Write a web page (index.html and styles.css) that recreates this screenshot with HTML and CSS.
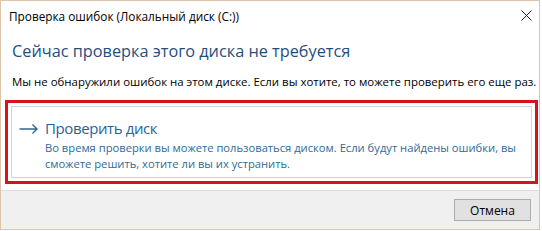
FILE: index.html
```html
<!DOCTYPE html>
<html lang="ru">
<head>
<meta charset="utf-8">
<title>Проверка ошибок</title>
<link rel="stylesheet" href="styles.css">
</head>
<body>
<div class="window">
  <div class="titlebar">
    <span class="title">Проверка ошибок (Локальный диск (C:))</span>
    <span class="close">
      <svg width="11" height="11" viewBox="0 0 11 11"><path d="M0.5 0.5 L10.5 10.5 M10.5 0.5 L0.5 10.5" stroke="#222" stroke-width="1" fill="none"/></svg>
    </span>
  </div>
  <div class="content">
    <div class="heading">Сейчас проверка этого диска не требуется</div>
    <div class="text">Мы не обнаружили ошибок на этом диске. Если вы хотите, то можете проверить его еще раз.</div>
  </div>
  <div class="highlight">
    <div class="cmdlink">
      <svg class="arrow" width="20" height="12" viewBox="0 0 20 12"><path d="M0.5 6 H18 M13.5 1.5 L18 6 L13.5 10.5" stroke="#2f6693" stroke-width="1.4" fill="none"/></svg>
      <div class="cmd-body">
        <div class="cmd-title">Проверить диск</div>
        <div class="cmd-desc">Во время проверки вы можете пользоваться диском. Если будут найдены ошибки, вы<br>сможете решить, хотите ли вы их устранить.</div>
      </div>
    </div>
  </div>
  <div class="footer">
    <button class="btn">Отмена</button>
  </div>
</div>
</body>
</html>
```
FILE: styles.css
```css
html, body {
  margin: 0;
  padding: 0;
  background: #ffffff;
}
.window {
  width: 538px;
  height: 228px;
  border: 1px solid #dcc5aa;
  background: #ffffff;
  display: flex;
  flex-direction: column;
  font-family: "Open Sans", "Noto Sans", sans-serif;
  font-size: 11.3px;
  color: #000;
}
.titlebar {
  height: 31px;
  box-sizing: border-box;
  display: flex;
  align-items: flex-start;
  justify-content: space-between;
  padding: 7px 7px 0 8px;
}
.title {
  font-size: 11.8px;
  line-height: 16px;
  color: #000;
}
.close {
  display: flex;
  margin-top: 2px;
}
.content {
  padding: 9px 11px 0 11px;
}
.heading {
  font-size: 16.3px;
  color: #1f4e7f;
  line-height: 20px;
  white-space: nowrap;
}
.text {
  margin-top: 13px;
  font-size: 11.45px;
  line-height: 16px;
  white-space: nowrap;
}
.highlight {
  margin: 10px 1px 0 4px;
  border: 3px solid #d8121b;
  padding: 3px;
}
.cmdlink {
  border: 1px solid #c9d7e3;
  display: flex;
  align-items: flex-start;
  padding: 11px 10px 5px 7px;
}
.arrow {
  margin-top: 5px;
  margin-right: 6px;
  flex: none;
}
.cmd-title {
  font-size: 15px;
  letter-spacing: -0.4px;
  line-height: 20px;
  color: #28639a;
}
.cmd-desc {
  margin-top: 2px;
  font-size: 11.2px;
  line-height: 16px;
  color: #2e6b98;
  white-space: nowrap;
}
.footer {
  margin-top: auto;
  height: 38px;
  border-top: 1px solid #dedede;
  background: #f0f0f0;
  display: flex;
  align-items: center;
  justify-content: flex-end;
  padding-right: 8px;
}
.btn {
  width: 77px;
  height: 22px;
  background: #e1e1e1;
  border: 1px solid #adadad;
  font-family: "Open Sans", "Noto Sans", sans-serif;
  font-size: 12px;
  color: #000;
  padding: 0;
}
```
